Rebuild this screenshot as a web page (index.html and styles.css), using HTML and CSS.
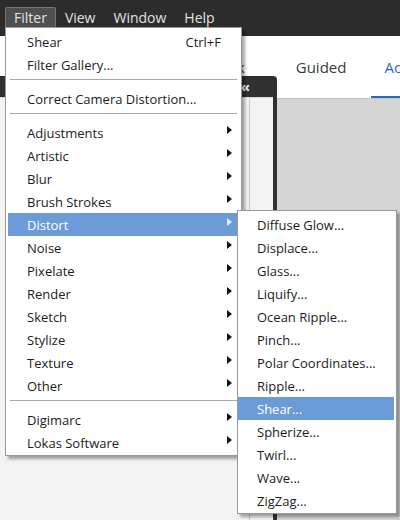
FILE: index.html
```html
<!DOCTYPE html>
<html>
<head>
    <meta charset="UTF-8">
    <title>Filter menu</title>
    <link rel="stylesheet" href="styles.css">
</head>
<body>
    <div class="app">
        <div class="menubar">
            <span class="menubar-item open">Filter</span>
            <span class="menubar-item">View</span>
            <span class="menubar-item">Window</span>
            <span class="menubar-item">Help</span>
        </div>
        <div class="workspace">
            <div class="side">
                <div class="panel">
                    <div class="panel-head">&laquo;</div>
                    <div class="panel-body">
                        <div class="panel-col"></div>
                    </div>
                </div>
            </div>
            <div class="main">
                <div class="tabs">
                    <span class="tab quick">Quick</span>
                    <span class="tab">Guided</span>
                    <span class="tab active">Actions</span>
                </div>
                <div class="canvas"></div>
            </div>
        </div>

        <!-- Filter menu -->
        <div class="menu filter-menu">
            <div class="item"><span class="label">Shear</span><span class="shortcut">Ctrl+F</span></div>
            <div class="item"><span class="label">Filter Gallery...</span></div>
            <div class="sep"></div>
            <div class="item"><span class="label">Correct Camera Distortion...</span></div>
            <div class="sep"></div>
            <div class="item"><span class="label">Adjustments</span><span class="arrow"></span></div>
            <div class="item"><span class="label">Artistic</span><span class="arrow"></span></div>
            <div class="item"><span class="label">Blur</span><span class="arrow"></span></div>
            <div class="item"><span class="label">Brush Strokes</span><span class="arrow"></span></div>
            <div class="item selected"><span class="label">Distort</span><span class="arrow"></span></div>
            <div class="item"><span class="label">Noise</span><span class="arrow"></span></div>
            <div class="item"><span class="label">Pixelate</span><span class="arrow"></span></div>
            <div class="item"><span class="label">Render</span><span class="arrow"></span></div>
            <div class="item"><span class="label">Sketch</span><span class="arrow"></span></div>
            <div class="item"><span class="label">Stylize</span><span class="arrow"></span></div>
            <div class="item"><span class="label">Texture</span><span class="arrow"></span></div>
            <div class="item"><span class="label">Other</span><span class="arrow"></span></div>
            <div class="sep"></div>
            <div class="item"><span class="label">Digimarc</span><span class="arrow"></span></div>
            <div class="item"><span class="label">Lokas Software</span><span class="arrow"></span></div>
        </div>

        <!-- Distort submenu -->
        <div class="menu sub-menu">
            <div class="item"><span class="label">Diffuse Glow...</span></div>
            <div class="item"><span class="label">Displace...</span></div>
            <div class="item"><span class="label">Glass...</span></div>
            <div class="item"><span class="label">Liquify...</span></div>
            <div class="item"><span class="label">Ocean Ripple...</span></div>
            <div class="item"><span class="label">Pinch...</span></div>
            <div class="item"><span class="label">Polar Coordinates...</span></div>
            <div class="item"><span class="label">Ripple...</span></div>
            <div class="item selected"><span class="label">Shear...</span></div>
            <div class="item"><span class="label">Spherize...</span></div>
            <div class="item"><span class="label">Twirl...</span></div>
            <div class="item"><span class="label">Wave...</span></div>
            <div class="item"><span class="label">ZigZag...</span></div>
        </div>
    </div>
</body>
</html>
```

FILE: styles.css
```css
body {
    margin: 0;
    background-color: #ffffff;
    font-family: "Open Sans", "Noto Sans", sans-serif;
}
.app {
    position: relative;
    width: 400px;
    height: 520px;
    overflow: hidden;
}

/* top menu bar */
.menubar {
    height: 36px;
    box-sizing: border-box;
    padding: 7px 0 0 5px;
    background-color: #2c2c2c;
    display: flex;
    align-items: flex-start;
}
.menubar-item {
    height: 20px;
    line-height: 19px;
    padding: 0 8px;
    color: #e2e2e2;
    font-size: 14px;
    box-sizing: border-box;
    border: 1px solid transparent;
    border-bottom: none;
}
.menubar-item.open {
    background-color: #4f4f4f;
    border-color: #747474;
    border-radius: 2px 2px 0 0;
}

/* background workspace */
.workspace {
    display: flex;
    height: 484px;
}
.side {
    width: 277px;
    padding-top: 40px;
    display: flex;
    flex-direction: column;
}
.panel {
    flex: 1;
    display: flex;
    flex-direction: column;
    background-color: #303030;
    border-top-right-radius: 4px;
    padding-right: 4px;
}
.panel-head {
    height: 21px;
    line-height: 20px;
    text-align: right;
    padding-right: 23px;
    color: #f0f0f0;
    font-size: 15px;
    font-weight: bold;
}
.panel-body {
    flex: 1;
    background-color: #f3f3f3;
    border-top: 1px solid #d8d8d8;
    padding-left: 249px;
}
.panel-col {
    height: 100%;
    border-left: 1px solid #c9c9c9;
}
.main {
    flex: 1;
    min-width: 0;
    display: flex;
    flex-direction: column;
}
.tabs {
    height: 62px;
    display: flex;
}
.tab {
    flex: none;
    padding: 0 13px;
    height: 62px;
    line-height: 62px;
    box-sizing: border-box;
    font-size: 15px;
    color: #3a3a3a;
    white-space: nowrap;
}
.tab.quick {
    margin-left: -85px;
    margin-right: 25px;
}
.tab.active {
    color: #2c6cb6;
    border-bottom: 2px solid #2c6cb6;
    margin-left: 12px;
}
.canvas {
    flex: 1;
    background-color: #d5d5d5;
    border-top: 1px solid #c4c4c4;
}

/* menus */
.menu {
    position: absolute;
    background-color: #ffffff;
    border: 1px solid #9a9a9a;
    box-shadow: 3px 3px 3px rgba(0, 0, 0, 0.35);
    font-size: 13px;
    color: #1c1c1c;
    box-sizing: border-box;
}
.filter-menu {
    left: 5px;
    top: 27px;
    width: 237px;
    height: 429px;
    padding: 2px 4px 0 2px;
}
.sub-menu {
    left: 237px;
    top: 210px;
    width: 160px;
    height: 304px;
    padding: 2px 2px 0 0;
}
.item {
    height: 23px;
    display: flex;
    align-items: center;
    padding: 0 5px 0 19px;
}
.label {
    flex: 1;
    white-space: nowrap;
}
.shortcut {
    margin-right: 11px;
}
.arrow {
    width: 0;
    height: 0;
    border-left: 5px solid #111111;
    border-top: 4px solid transparent;
    border-bottom: 4px solid transparent;
    margin-bottom: 5px;
}
.item.selected {
    background-color: #6c9cd8;
    color: #ffffff;
}
.item.selected .arrow {
    border-left-color: #e4eefa;
}
.sep {
    height: 1px;
    margin: 3px 0 7px 2px;
    background-color: #a8a8a8;
}
```
